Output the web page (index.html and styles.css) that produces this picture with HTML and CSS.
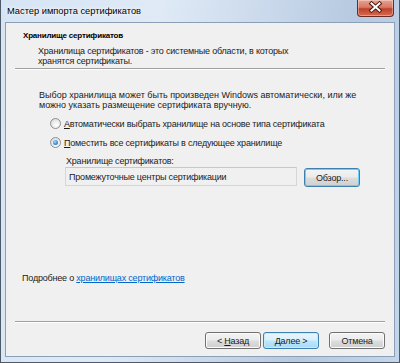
FILE: index.html
```html
<!DOCTYPE html>
<html>
<head>
    <meta charset="utf-8">
    <title>Мастер импорта сертификатов</title>
    <link rel="stylesheet" href="styles.css">
</head>

<body>
<div class="window">
    <div class="titlebar">
        <span class="title">Мастер импорта сертификатов</span>
        <div class="close">
            <svg width="37" height="17" viewBox="0 0 37 17">
                <path d="M14.5 4.5 L22.5 11.5 M22.5 4.5 L14.5 11.5" stroke="#4a1810" stroke-width="4" stroke-linecap="square"/>
                <path d="M14.5 4.5 L22.5 11.5 M22.5 4.5 L14.5 11.5" stroke="#ffffff" stroke-width="2" stroke-linecap="square"/>
            </svg>
        </div>
    </div>

    <div class="client">
        <div class="header">
            <div class="header_title">Хранилище сертификатов</div>
            <div class="header_desc">Хранилища сертификатов - это системные области, в которых<br>хранятся сертификаты.</div>
        </div>
        <div class="sep"></div>

        <div class="body">
            <p class="intro">Выбор хранилища может быть произведен Windows автоматически, или же<br>можно указать размещение сертификата вручную.</p>
            <label class="option">
                <span class="radio"></span>
                <span><u>А</u>втоматически выбрать хранилище на основе типа сертификата</span>
            </label>
            <label class="option option_second">
                <span class="radio checked"></span>
                <span><u>П</u>оместить все сертификаты в следующее хранилище</span>
            </label>
            <div class="store">
                <div class="store_label">Хранилище сертификатов:</div>
                <div class="store_row">
                    <div class="store_field">Промежуточные центры сертификации</div>
                    <button class="btn btn_glow">Обзор...</button>
                </div>
            </div>
        </div>

        <div class="more">Подробнее о <a href="#">хранилищах сертификатов</a></div>
        <div class="sep sep_bottom"></div>

        <div class="actions">
            <button class="btn">&lt; <u>Н</u>азад</button>
            <button class="btn btn_default"><u>Д</u>алее &gt;</button>
            <button class="btn btn_cancel">Отмена</button>
        </div>
    </div>
</div>
</body>
</html>
```

FILE: styles.css
```css
body {
    margin: 0;
    width: 400px;
    height: 363px;
    overflow: hidden;
    font-family: "Liberation Sans", Arial, sans-serif;
    font-size: 9px;
    letter-spacing: -0.2px;
    color: #1b1b1b;
    background-color: #c9dbef;
}

div.window {
    box-sizing: border-box;
    width: 400px;
    height: 363px;
    border: 1px solid #4d5a68;
    border-top: 0;
    padding: 0 4px 5px 4px;
    background: linear-gradient(100deg, #d6e4f4 0%, #dfeaf6 35%, #cad9eb 58%, #b6c9e0 78%, #c4d6ea 100%);
}

div.titlebar {
    display: flex;
    justify-content: space-between;
    align-items: flex-start;
    height: 22px;
}

span.title {
    font-size: 9.3px;
    letter-spacing: 0;
    color: #000000;
    padding: 6px 0 0 2px;
    text-shadow: 0 0 6px #ffffff, 0 0 3px #ffffff;
}

div.close {
    width: 37px;
    height: 17px;
    margin-right: 1px;
    box-sizing: border-box;
    border: 1px solid #6b2a22;
    border-top: 0;
    border-radius: 0 0 4px 4px;
    background: linear-gradient(#e8a090 0%, #d77a66 45%, #c2402a 55%, #d36c52 100%);
    box-shadow: inset 0 0 0 1px rgba(255, 255, 255, 0.35);
}

div.close svg {
    display: block;
    margin: -1px 0 0 -1px;
}

div.client {
    box-sizing: border-box;
    height: 335px;
    border: 1px solid #8b9fb6;
    background-color: #f0f0f0;
    display: flex;
    flex-direction: column;
    line-height: 10px;
}

div.header {
    padding: 8px 0 0 17px;
}

div.header_title {
    font-size: 8px;
    font-weight: bold;
    color: #000000;
}

div.header_desc {
    margin: 5px 0 0 15px;
}

div.sep {
    margin: 2px 9px 0 9px;
    border-top: 1px solid #a0a0a0;
    border-bottom: 1px solid #ffffff;
}

div.body {
    padding: 20px 0 0 33px;
}

p.intro {
    margin: 0;
    letter-spacing: 0;
}

label.option {
    display: flex;
    align-items: center;
    height: 13px;
    margin: 7px 0 0 11px;
}

label.option_second {
    margin-top: 6px;
}

span.radio {
    box-sizing: border-box;
    width: 11px;
    height: 11px;
    margin-right: 3px;
    border-radius: 50%;
    border: 1px solid #8c8f94;
    background: radial-gradient(circle at 60% 65%, #ffffff 0%, #f2f2f2 35%, #cfd1d4 100%);
    display: flex;
    align-items: center;
    justify-content: center;
}

span.radio.checked::after {
    content: "";
    width: 5px;
    height: 5px;
    border-radius: 50%;
    background: radial-gradient(circle at 40% 35%, #a8dcfb 0%, #3c8fd8 55%, #1d5fa8 100%);
}

div.store {
    margin: 7px 0 0 26px;
}

div.store_label {
    padding-left: 1px;
}

div.store_row {
    display: flex;
    align-items: flex-start;
    margin-top: 1px;
}

div.store_field {
    box-sizing: border-box;
    width: 232px;
    height: 19px;
    padding: 4px 0 0 3px;
    border: 1px solid #d6d6d6;
    border-top-color: #c8c8c8;
    background-color: #f0f0f0;
}

button.btn {
    box-sizing: border-box;
    width: 56px;
    height: 17px;
    padding: 0;
    font-family: "Liberation Sans", Arial, sans-serif;
    font-size: 9px;
    letter-spacing: -0.2px;
    color: #1b1b1b;
    border: 1px solid #707070;
    border-radius: 3px;
    background: linear-gradient(#f4f4f4 0%, #ebebeb 48%, #dddddd 52%, #cfcfcf 100%);
    box-shadow: inset 0 0 0 1px #fbfbfb;
}

button.btn_glow {
    height: 19px;
    margin: 1px 0 0 7px;
    border-color: #3c7fb1;
    box-shadow: inset 0 0 0 1px #6fd0f5;
}

button.btn_default {
    margin-left: 2px;
    border-color: #3c7fb1;
    background: linear-gradient(#eaf6fd 0%, #d9f0fc 48%, #bee6fd 52%, #a7d9f5 100%);
    box-shadow: inset 0 0 0 1px #c8ecfc;
}

button.btn_cancel {
    margin-left: 10px;
}

div.more {
    margin-top: auto;
    padding-left: 16px;
}

div.more a {
    color: #0066cc;
}

div.sep_bottom {
    margin-top: 38px;
}

div.actions {
    display: flex;
    justify-content: flex-end;
    margin-top: 9px;
    padding: 0 9px 7px 0;
}
```
